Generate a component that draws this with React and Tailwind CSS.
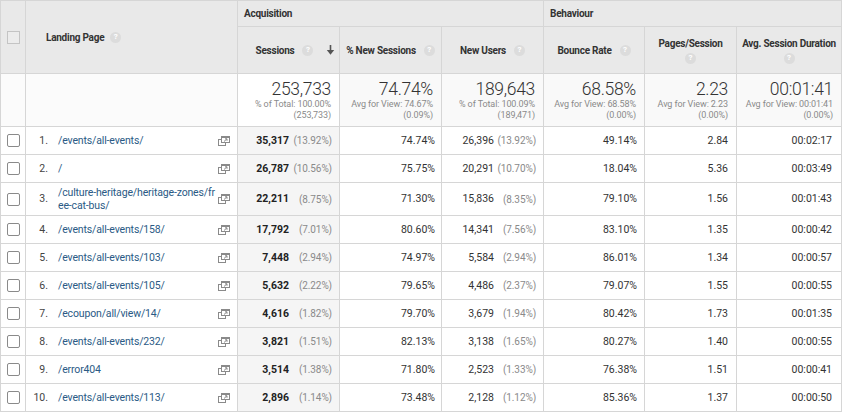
import React from 'react';

const rows = [
  { n: 1, page: '/events/all-events/', s: '35,317', sp: '(13.92%)', ns: '74.74%', nu: '26,396', nup: '(13.92%)', br: '49.14%', pps: '2.84', dur: '00:02:17' },
  { n: 2, page: '/', s: '26,787', sp: '(10.56%)', ns: '75.75%', nu: '20,291', nup: '(10.70%)', br: '18.04%', pps: '5.36', dur: '00:03:49' },
  { n: 3, page: '/culture-heritage/heritage-zones/free-cat-bus/', s: '22,211', sp: '(8.75%)', ns: '71.30%', nu: '15,836', nup: '(8.35%)', br: '79.10%', pps: '1.56', dur: '00:01:43' },
  { n: 4, page: '/events/all-events/158/', s: '17,792', sp: '(7.01%)', ns: '80.60%', nu: '14,341', nup: '(7.56%)', br: '83.10%', pps: '1.35', dur: '00:00:42' },
  { n: 5, page: '/events/all-events/103/', s: '7,448', sp: '(2.94%)', ns: '74.97%', nu: '5,584', nup: '(2.94%)', br: '86.01%', pps: '1.34', dur: '00:00:57' },
  { n: 6, page: '/events/all-events/105/', s: '5,632', sp: '(2.22%)', ns: '79.65%', nu: '4,486', nup: '(2.37%)', br: '79.07%', pps: '1.55', dur: '00:00:55' },
  { n: 7, page: '/ecoupon/all/view/14/', s: '4,616', sp: '(1.82%)', ns: '79.70%', nu: '3,679', nup: '(1.94%)', br: '80.42%', pps: '1.73', dur: '00:01:35' },
  { n: 8, page: '/events/all-events/232/', s: '3,821', sp: '(1.51%)', ns: '82.13%', nu: '3,138', nup: '(1.65%)', br: '80.27%', pps: '1.40', dur: '00:00:55' },
  { n: 9, page: '/error404', s: '3,514', sp: '(1.38%)', ns: '71.80%', nu: '2,523', nup: '(1.33%)', br: '76.38%', pps: '1.51', dur: '00:00:41' },
  { n: 10, page: '/events/all-events/113/', s: '2,896', sp: '(1.14%)', ns: '73.48%', nu: '2,128', nup: '(1.12%)', br: '85.36%', pps: '1.37', dur: '00:00:50' },
];

const totals = [
  { big: '253,733', sub: '% of Total: 100.00%', paren: '(253,733)', white: true },
  { big: '74.74%', sub: 'Avg for View: 74.67%', paren: '(0.09%)' },
  { big: '189,643', sub: '% of Total: 100.09%', paren: '(189,471)' },
  { big: '68.58%', sub: 'Avg for View: 68.58%', paren: '(0.00%)' },
  { big: '2.23', sub: 'Avg for View: 2.23', paren: '(0.00%)' },
  { big: '00:01:41', sub: 'Avg for View: 00:01:41', paren: '(0.00%)' },
];

const Help = () => (
  <span className="inline-flex items-center justify-center w-[11px] h-[11px] rounded-full bg-[#dcdcdc] text-white text-[8px] font-bold leading-none align-middle tracking-normal">
    ?
  </span>
);

const Checkbox = ({ header }) => (
  <span
    className={`inline-block w-[13px] h-[13px] border ${header ? 'border-[#c4c4c4] bg-[#ececec]' : 'border-[#8a8a8a] bg-white rounded-[2px]'}`}
  ></span>
);

const PopoutIcon = () => (
  <svg width="12" height="10" viewBox="0 0 12 10" className="shrink-0">
    <rect x="0.5" y="3.5" width="7" height="6" fill="none" stroke="#8a8a8a" />
    <rect x="3.5" y="0.5" width="8" height="6" fill="#fff" stroke="#8a8a8a" />
    <rect x="3.5" y="0.5" width="8" height="1.5" fill="#8a8a8a" />
    <path d="M6 5.5 L9 2.8 M7 2.8 H9 V4.8" fill="none" stroke="#8a8a8a" strokeWidth="1" />
  </svg>
);

const SortArrow = () => (
  <svg width="9" height="11" viewBox="0 0 9 11">
    <path d="M4.5 0.5 V7" stroke="#555" strokeWidth="1.6" />
    <path d="M0.8 5.6 L4.5 10.2 L8.2 5.6 Z" fill="#555" />
  </svg>
);

const border = 'border border-[#d6d6d6]';
const head = 'text-[10px] font-bold text-[#333] tracking-[-0.25px]';

const App = () => {
  return (
    <div className="w-[843px] h-[416px] bg-white overflow-hidden text-[#333]" style={{ fontFamily: 'Roboto, "Liberation Sans", Arial, sans-serif' }}>
      <table className="table-fixed border-collapse w-[841px]">
        <colgroup>
          <col className="w-[25px]" />
          <col className="w-[212px]" />
          <col className="w-[102px]" />
          <col className="w-[102px]" />
          <col className="w-[102px]" />
          <col className="w-[101px]" />
          <col className="w-[92px]" />
          <col className="w-[105px]" />
        </colgroup>
        <thead>
          <tr className={`h-[26px] bg-[#e9e9e9] ${head}`}>
            <th rowSpan={2} className={`${border} text-center align-middle`}>
              <div className="flex justify-center">
                <Checkbox header />
              </div>
            </th>
            <th rowSpan={2} className={`${border} text-left align-middle pl-[20px]`}>
              <span className="inline-flex items-center gap-[6px]">
                Landing Page <Help />
              </span>
            </th>
            <th colSpan={3} className={`${border} text-left pl-[6px]`}>
              Acquisition
            </th>
            <th colSpan={3} className={`${border} text-left pl-[6px]`}>
              Behaviour
            </th>
          </tr>
          <tr className={`h-[47px] bg-[#e9e9e9] ${head}`}>
            <th className={`${border} relative`}>
              <span className="inline-flex items-center gap-[8px] pr-[8px]">
                Sessions <Help />
              </span>
              <span className="absolute right-[4px] top-1/2 -translate-y-1/2 flex">
                <SortArrow />
              </span>
            </th>
            <th className={`${border}`}>
              <span className="inline-flex items-center gap-[8px]">
                % New Sessions <Help />
              </span>
            </th>
            <th className={`${border}`}>
              <span className="inline-flex items-center gap-[8px]">
                New Users <Help />
              </span>
            </th>
            <th className={`${border}`}>
              <span className="inline-flex items-center gap-[8px]">
                Bounce Rate <Help />
              </span>
            </th>
            <th className={`${border} leading-[14px]`}>
              <div>Pages/Session</div>
              <div className="flex justify-center mt-[2px]">
                <Help />
              </div>
            </th>
            <th className={`${border} leading-[14px]`}>
              <div>Avg. Session Duration</div>
              <div className="flex justify-center mt-[2px]">
                <Help />
              </div>
            </th>
          </tr>
        </thead>
        <tbody>
          <tr className="h-[53px] bg-[#f9f9f9]">
            <td className={`${border} bg-[#fbfbfb]`}></td>
            <td className={`${border} bg-[#fbfbfb]`}></td>
            {totals.map((t) => (
              <td key={t.big} className={`${border} text-right pr-[8px] align-top pt-[5px] ${t.white ? 'bg-white' : ''}`}>
                <div className="text-[17.5px] font-light leading-[20px] text-[#333] tracking-[-0.3px]">{t.big}</div>
                <div className="text-[9px] leading-[10.5px] text-[#8a8a8a] tracking-[-0.1px]">{t.sub}</div>
                <div className="text-[9px] leading-[10.5px] text-[#8a8a8a] tracking-[-0.1px]">{t.paren}</div>
              </td>
            ))}
          </tr>
          {rows.map((r) => (
            <tr key={r.n} className="h-[28px] text-[10.5px] text-[#333]">
              <td className={`${border} text-center`}>
                <div className="flex justify-center">
                  <Checkbox />
                </div>
              </td>
              <td className={`${border} py-[3px]`}>
                <div className="flex items-center pr-[7px]">
                  <span className="w-[32px] shrink-0 text-right pr-[10px] text-[#444]">{r.n}.</span>
                  <a className="flex-1 text-[#2a5a85] break-all leading-[13px] tracking-[-0.15px]">{r.page}</a>
                  <PopoutIcon />
                </div>
              </td>
              <td className={`${border} bg-[#f5f5f5] pr-[7px]`}>
                <div className="flex justify-end items-center">
                  <span className="font-bold text-[#222]">{r.s}</span>
                  <span className="w-[43px] text-right text-[10px] text-[#8a8a8a] tracking-[-0.1px]">{r.sp}</span>
                </div>
              </td>
              <td className={`${border} text-right pr-[6px]`}>{r.ns}</td>
              <td className={`${border} pr-[7px]`}>
                <div className="flex justify-end items-center">
                  <span>{r.nu}</span>
                  <span className="w-[42px] text-right text-[10px] text-[#8a8a8a] tracking-[-0.1px]">{r.nup}</span>
                </div>
              </td>
              <td className={`${border} text-right pr-[7px]`}>{r.br}</td>
              <td className={`${border} text-right pr-[8px]`}>{r.pps}</td>
              <td className={`${border} text-right pr-[9px]`}>{r.dur}</td>
            </tr>
          ))}
        </tbody>
      </table>
    </div>
  );
};

export default App;
